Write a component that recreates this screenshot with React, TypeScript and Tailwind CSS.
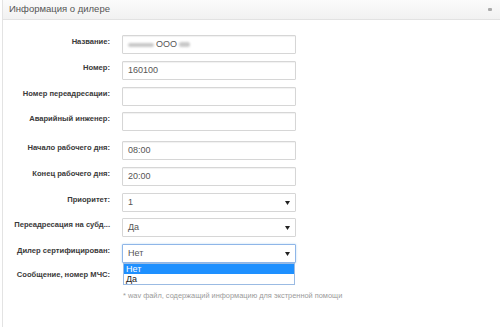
import { ReactNode } from 'react'

// Карточка «Информация о дилере» с раскрытым списком выбора

const font = { fontFamily: '"Liberation Sans", Arial, sans-serif' }

function Caret() {
  return (
    <svg width="5" height="4" viewBox="0 0 5 4" className="absolute right-[5px] top-[7px]">
      <path d="M0 0h5L2.5 4z" fill="#222" />
    </svg>
  )
}

function Row({ label, className, children }: { label: string; className?: string; children?: ReactNode }) {
  return (
    <div className={`flex h-[19px] items-start ${className ?? ''}`}>
      <label className="w-[107px] shrink-0 pt-[2px] text-right text-[7.6px] font-bold leading-[10px] text-[#3a3a3a] whitespace-nowrap">
        {label}
      </label>
      <div className="ml-[12px] w-[174px]">{children}</div>
    </div>
  )
}

function Input({ value }: { value?: ReactNode }) {
  return (
    <div className="flex h-[19px] items-center rounded-[1px] border border-[#d6d6d6] bg-white px-[5px] text-[9px] text-[#555] shadow-[inset_0_1px_1px_rgba(0,0,0,0.06)]">
      {value}
    </div>
  )
}

function Select({ value, focused }: { value: string; focused?: boolean }) {
  return (
    <div
      className={`relative flex h-[19px] items-center rounded-[1px] border bg-white px-[5px] text-[9px] text-[#555] ${
        focused ? 'border-[#8fb6e8] shadow-[0_0_2px_rgba(102,175,233,0.5)]' : 'border-[#d6d6d6]'
      }`}
    >
      {value}
      <Caret />
    </div>
  )
}

export default function App() {
  return (
    <div className="h-[327px] w-[500px] overflow-hidden bg-white" style={font}>
      <div className="ml-[2px] h-full border-l border-[#e3e3e3]">
        <div className="flex h-[20px] items-center justify-between border-b border-[#e2e2e2] bg-gradient-to-b from-[#fbfbfb] to-[#f1f1f1] pl-[6px] pr-[8px]">
          <span className="text-[9.5px] text-[#555]">Информация о дилере</span>
          <span className="h-[3px] w-[4px] rounded-[1px] bg-[#aaa]" />
        </div>

        <div className="flex flex-col pt-[15px]">
          <Row label="Название:">
            <Input
              value={
                <span className="flex items-center gap-[2px]">
                  <span className="inline-block h-[4px] w-[26px] rounded-full bg-[#c9c9c9] blur-[1px]" />
                  <span>ООО</span>
                  <span className="inline-block h-[5px] w-[11px] rounded-full bg-[#c9c9c9] blur-[1px]" />
                </span>
              }
            />
          </Row>
          <Row label="Номер:" className="mt-[7px]">
            <Input value="160100" />
          </Row>
          <Row label="Номер переадресации:" className="mt-[7px]">
            <Input />
          </Row>
          <Row label="Аварийный инженер:" className="mt-[6px]">
            <Input />
          </Row>
          <Row label="Начало рабочего дня:" className="mt-[10px]">
            <Input value="08:00" />
          </Row>
          <Row label="Конец рабочего дня:" className="mt-[7px]">
            <Input value="20:00" />
          </Row>
          <Row label="Приоритет:" className="mt-[7px]">
            <Select value="1" />
          </Row>
          <Row label="Переадресация на субд..." className="mt-[6px]">
            <Select value="Да" />
          </Row>
          <Row label="Дилер сертифицирован:" className="relative z-10 mt-[7px]">
            <div className="relative">
              <Select value="Нет" focused />
              <div className="absolute left-[1px] right-[1px] top-[19px] border border-[#9bbbe3] bg-white text-[9px] leading-[10px]">
                <div className="bg-[#1e90ff] px-[2px] text-white">Нет</div>
                <div className="px-[2px] text-[#222]">Да</div>
              </div>
            </div>
          </Row>
          <Row label="Сообщение, номер МЧС:" className="mt-[5px]" />
          <div className="ml-[120px] mt-[4px] text-[7.4px] leading-[10px] text-[#9a9a9a]">
            * wav файл, содержащий информацию для экстренной помощи
          </div>
        </div>
      </div>
    </div>
  )
}
